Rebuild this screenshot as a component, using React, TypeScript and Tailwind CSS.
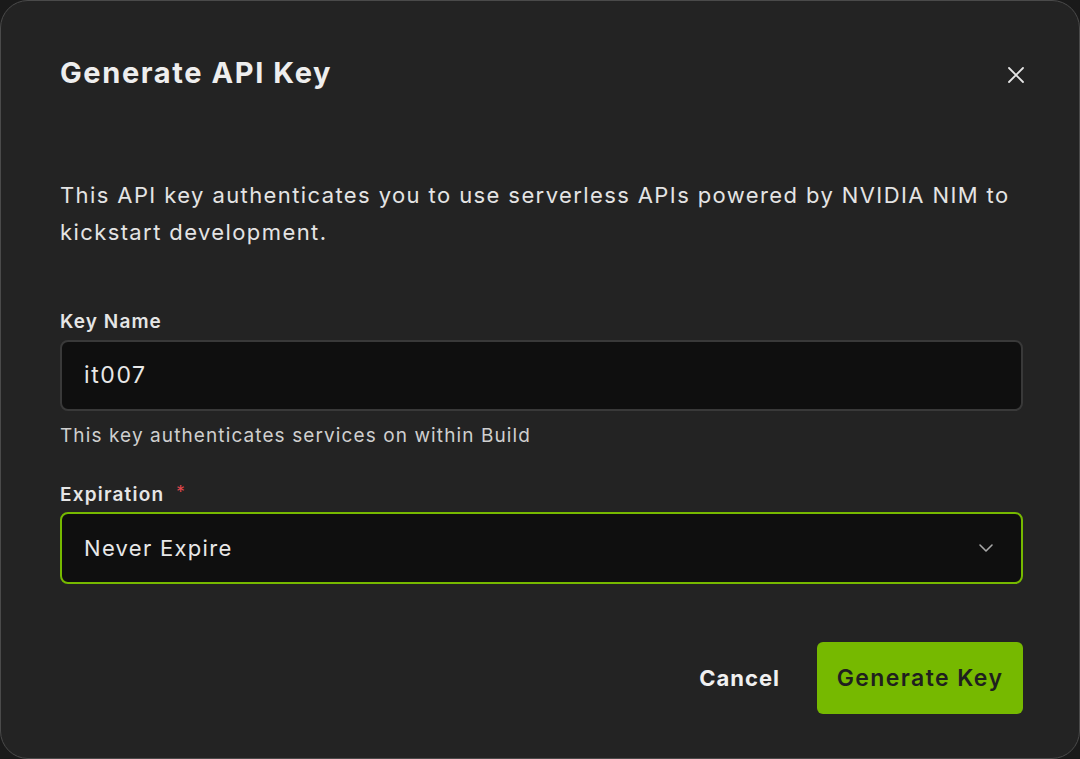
import React from "react";

export default function App() {
  return (
    <div className="w-[1080px] h-[759px] bg-[#1a1a1a] overflow-hidden" style={{ fontFamily: "Inter, 'Noto Sans', sans-serif" }}>
      <div className="w-[1080px] h-[759px] bg-[#232323] border border-[#4a4a4a] rounded-[28px] flex flex-col px-[59px]">
        <div className="flex items-center justify-between pt-[46px] h-[96px]">
          <h1 className="text-[29px] font-bold text-[#eeeeee] tracking-[1.6px] leading-none">Generate API Key</h1>
          <button className="w-[24px] h-[24px] mr-[-8px] mt-[6px] flex items-center justify-center text-[#e5e5e5]">
            <svg width="20" height="20" viewBox="0 0 20 20" fill="none" stroke="currentColor" strokeWidth="1.8" strokeLinecap="round">
              <path d="M3 3 L17 17 M17 3 L3 17" />
            </svg>
          </button>
        </div>
        <p className="mt-[80px] text-[22px] leading-[37px] text-[#e4e4e4] tracking-[1.4px] pr-[4px]">
          This API key authenticates you to use serverless APIs powered by NVIDIA NIM to kickstart development.
        </p>
        <label className="mt-[59px] text-[19px] font-semibold text-[#e6e6e6] leading-[24px] tracking-[1.1px]">Key Name</label>
        <div className="mt-[6px] h-[71px] w-[963px] bg-[#0f0f0f] border-2 border-[#393939] rounded-[8px] flex items-center px-[22px]">
          <span className="text-[23px] text-[#e8e8e8] tracking-[1.6px]">it007</span>
        </div>
        <p className="mt-[13px] text-[19px] text-[#cfcfcf] leading-[24px] tracking-[1.1px]">This key authenticates services on within Build</p>
        <div className="mt-[35px] flex items-start leading-[24px]">
          <span className="text-[19px] font-semibold text-[#e6e6e6] tracking-[1.2px]">Expiration</span>
          <span className="ml-[12px] text-[17px] text-[#e5484d] leading-[18px]">*</span>
        </div>
        <div className="mt-[5px] h-[72px] w-[963px] bg-[#0f0f0f] border-2 border-[#76b900] rounded-[8px] flex items-center justify-between pl-[22px] pr-[26px]">
          <span className="text-[22px] text-[#e8e8e8] tracking-[1.3px]">Never Expire</span>
          <svg width="18" height="18" viewBox="0 0 18 18" fill="none" stroke="#a8a8a8" strokeWidth="1.6" strokeLinecap="round" strokeLinejoin="round">
            <path d="M3 6 L9 12 L15 6" />
          </svg>
        </div>
        <div className="mt-[58px] flex items-center justify-end w-[963px] gap-[37px]">
          <button className="text-[22px] font-bold text-[#f0f0f0] tracking-[1px]">Cancel</button>
          <button className="h-[72px] w-[206px] bg-[#76b900] rounded-[6px] text-[23px] font-semibold text-[#1f1f1f] tracking-[1.4px]">Generate Key</button>
        </div>
      </div>
    </div>
  );
}
